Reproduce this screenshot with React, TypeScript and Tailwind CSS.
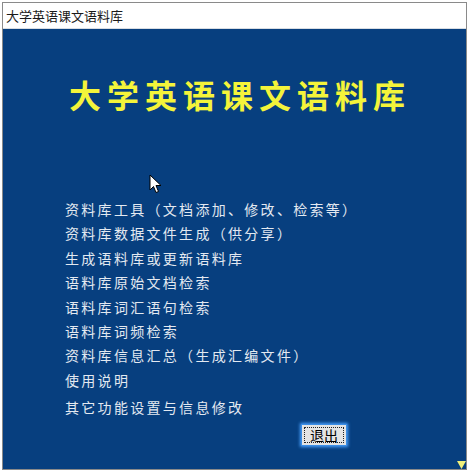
import React from 'react'

const FONT = '"Noto Sans CJK SC", "Liberation Sans", sans-serif'

const menuItems = [
  '资料库工具（文档添加、修改、检索等）',
  '资料库数据文件生成（供分享）',
  '生成语料库或更新语料库',
  '语料库原始文档检索',
  '语料库词汇语句检索',
  '语料库词频检索',
  '资料库信息汇总（生成汇编文件）',
  '使用说明',
]

const App: React.FC = () => {
  return (
    <div className="w-[469px] h-[472px] bg-white overflow-hidden" style={{ fontFamily: FONT }}>
      <div className="ml-[2px] mt-[2px] w-[465px] h-[468px] border border-[#8a8a8a] flex flex-col relative">
        {/* window caption */}
        <div className="h-[26px] bg-white flex items-center pl-[3px] text-[13px] text-[#1a1a1a] border-b border-[#d8dde3]">
          大学英语课文语料库
        </div>

        {/* main panel */}
        <div className="flex-1 bg-[#073f7f] relative flex flex-col">
          <h1 className="mt-[45px] ml-[66px] text-[32px] leading-[40px] font-bold tracking-[6px] text-[#f4f43a]">
            大学英语课文语料库
          </h1>

          <ul className="mt-[83px] ml-[62px] flex flex-col text-[14px] tracking-[2.3px] text-[#e3e9f1]">
            {menuItems.map((item) => (
              <li key={item} className="leading-[24.4px] h-[24.4px]">
                {item}
              </li>
            ))}
            <li className="leading-[24px] mt-[3px]">其它功能设置与信息修改</li>
          </ul>

          <div className="flex justify-start ml-[298px] mt-[5px]">
            <button className="w-[46px] h-[22px] bg-[#e4e4e4] border border-[#3a8ee6] shadow-[0_0_3px_1px_#4aa0ff] flex items-center justify-center p-[2px]">
              <span className="w-full h-full border border-dotted border-[#222] flex items-center justify-center text-[14px] leading-none text-black">
                退出
              </span>
            </button>
          </div>

          {/* mouse pointer */}
          <svg className="absolute left-[146px] top-[145px]" width="14" height="20" viewBox="0 0 14 20">
            <path d="M1 1 L1 16 L4.5 12.5 L7 18.5 L9.5 17.5 L7 11.5 L12 11.5 Z" fill="#fff" stroke="#000" strokeWidth="1" />
          </svg>

          {/* resize grip */}
          <svg className="absolute right-0 bottom-0" width="9" height="8" viewBox="0 0 9 8">
            <path d="M0 0 L9 0 L4.5 8 Z" fill="#f0f07a" />
          </svg>
        </div>
      </div>
    </div>
  )
}

export default App
